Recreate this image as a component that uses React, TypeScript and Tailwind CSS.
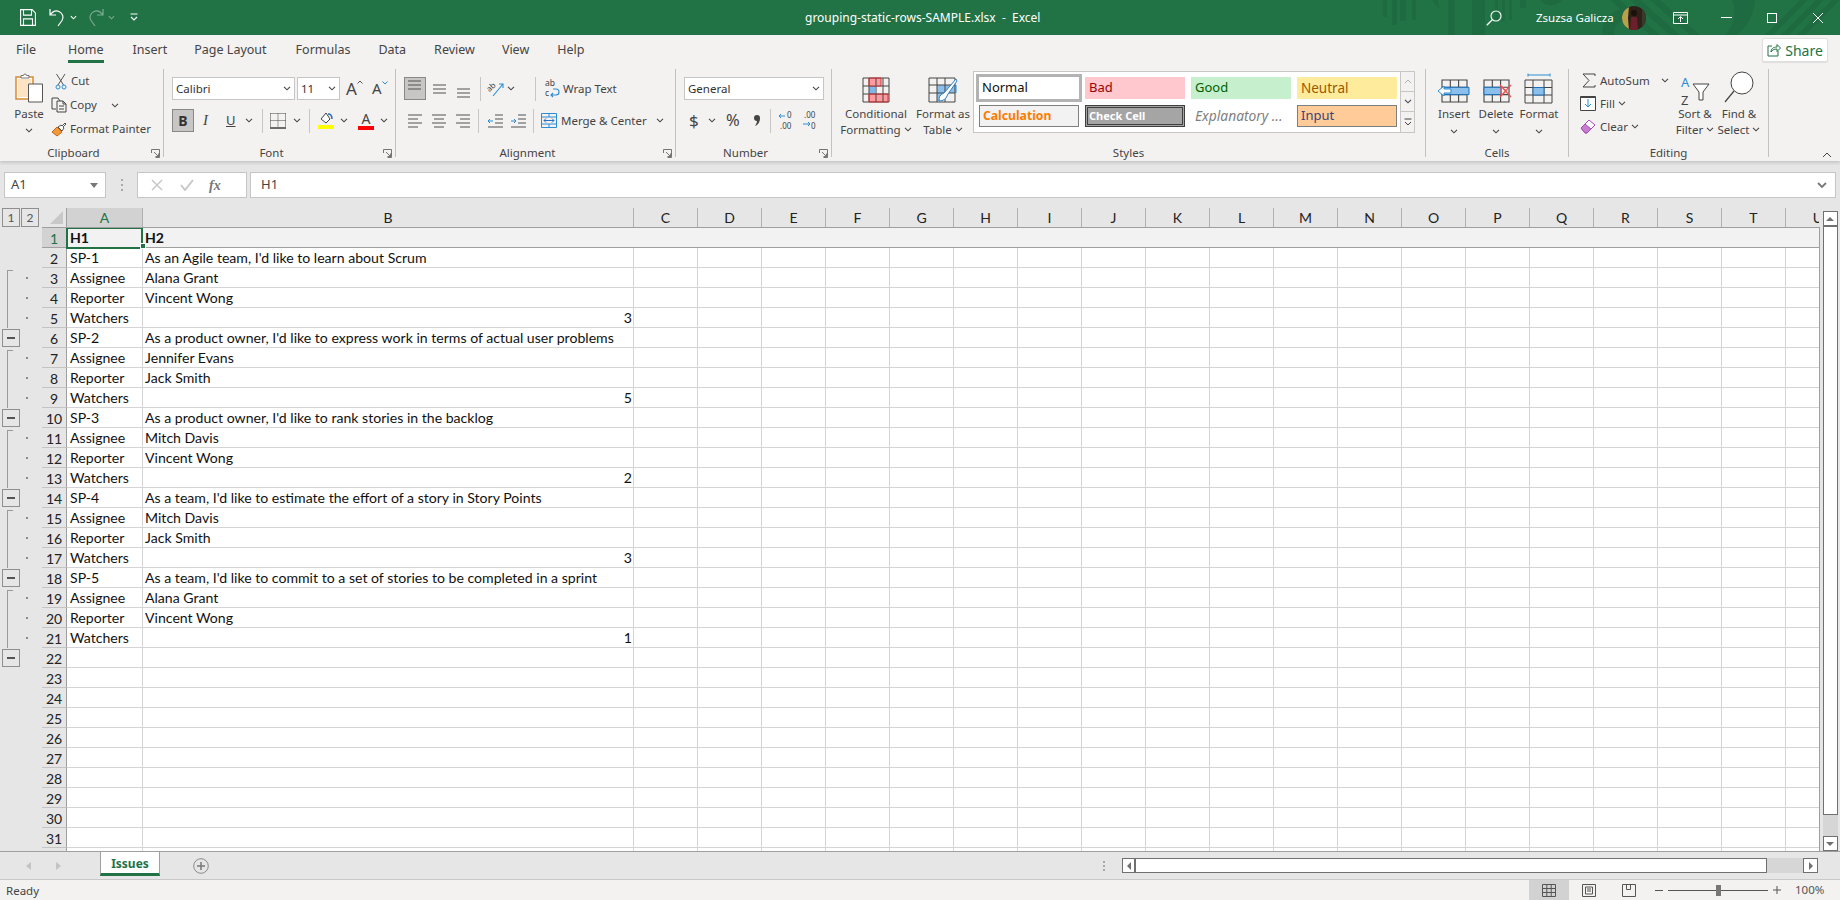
import type { ReactNode } from 'react'

const columns = ['C', 'D', 'E', 'F', 'G', 'H', 'I', 'J', 'K', 'L', 'M', 'N', 'O', 'P', 'Q', 'R', 'S', 'T']

type Row = { a?: string; b?: string; n?: string }

const issues: Row[] = [
  { a: 'SP-1', b: "As an Agile team, I'd like to learn about Scrum" },
  { a: 'Assignee', b: 'Alana Grant' },
  { a: 'Reporter', b: 'Vincent Wong' },
  { a: 'Watchers', n: '3' },
  { a: 'SP-2', b: "As a product owner, I'd like to express work in terms of actual user problems" },
  { a: 'Assignee', b: 'Jennifer Evans' },
  { a: 'Reporter', b: 'Jack Smith' },
  { a: 'Watchers', n: '5' },
  { a: 'SP-3', b: "As a product owner, I'd like to rank stories in the backlog" },
  { a: 'Assignee', b: 'Mitch Davis' },
  { a: 'Reporter', b: 'Vincent Wong' },
  { a: 'Watchers', n: '2' },
  { a: 'SP-4', b: "As a team, I'd like to estimate the effort of a story in Story Points" },
  { a: 'Assignee', b: 'Mitch Davis' },
  { a: 'Reporter', b: 'Jack Smith' },
  { a: 'Watchers', n: '3' },
  { a: 'SP-5', b: "As a team, I'd like to commit to a set of stories to be completed in a sprint" },
  { a: 'Assignee', b: 'Alana Grant' },
  { a: 'Reporter', b: 'Vincent Wong' },
  { a: 'Watchers', n: '1' },
  ...Array.from({ length: 10 }, () => ({})),
]

function Chev({ className = '' }: { className?: string }) {
  return (
    <svg width="8" height="5" viewBox="0 0 8 5" className={`shrink-0 ${className}`}>
      <path d="M1 .8l3 3 3-3" fill="none" stroke="#444" strokeWidth="1.1" />
    </svg>
  )
}

function Launcher() {
  return (
    <svg width="9" height="9" viewBox="0 0 9 9" className="absolute right-[3px] top-[4px]">
      <path d="M.5 4V.5H8.5V8.5H4.5M3 3l4.5 4.5M7.5 4.5v3h-3" fill="none" stroke="#666" strokeWidth=".9" />
    </svg>
  )
}

function Group({ width, label, launcher, children }: { width: string; label: string; launcher?: boolean; children: ReactNode }) {
  return (
    <div className={`flex h-[88px] shrink-0 flex-col border-r border-[#c4c2c0] ${width}`}>
      <div className="flex h-[76px] shrink-0">{children}</div>
      <div className={`relative flex h-[12px] justify-center text-[11.5px] leading-[16px] text-[#444] ${launcher ? 'pr-[16px]' : ''}`}>
        {label}
        {launcher && <Launcher />}
      </div>
    </div>
  )
}

function VSep({ className = '' }: { className?: string }) {
  return <div className={`h-[24px] w-px shrink-0 bg-[#c8c6c4] ${className}`} />
}

function Lines({ mode, className = '' }: { mode: 'top' | 'mid' | 'bot' | 'left' | 'center' | 'right'; className?: string }) {
  const paths = {
    top: 'M1 2h13M1 6h13M1 10h13',
    mid: 'M1 4h13M1 8h13M1 12h13',
    bot: 'M1 7h13M1 11h13M1 15h13',
    left: 'M1 2h14M1 6h10M1 10h14M1 14h10',
    center: 'M1 2h14M3 6h10M1 10h14M3 14h10',
    right: 'M1 2h14M5 6h10M1 10h14M5 14h10',
  }
  return (
    <svg width="16" height="16" viewBox="0 0 16 16" className={`shrink-0 ${className}`}>
      <path d={paths[mode]} stroke="#505050" strokeWidth="1" fill="none" />
    </svg>
  )
}

function TableIcon({ children, w = 32 }: { children?: ReactNode; w?: number }) {
  return (
    <svg width={w} height="26" viewBox="0 0 32 26" className="shrink-0">
      <path d="M4 2h25v22H4zM4 9.3h25M4 16.6h25M12.3 2v22M20.6 2v22" fill="none" stroke="#444" strokeWidth="1.1" />
      {children}
    </svg>
  )
}

function BigButton({ icon, lines, className = '' }: { icon: ReactNode; lines: ReactNode[]; className?: string }) {
  return (
    <div className={`flex shrink-0 flex-col items-center text-[11.5px] leading-[16px] text-[#444] ${className}`}>
      <div className="flex h-[36px] items-end justify-center pb-[1px]">{icon}</div>
      <div className="mt-[1px] whitespace-nowrap">{lines[0]}</div>
      <div className="flex h-[15px] items-center gap-[3px] whitespace-nowrap">{lines[1]}</div>
    </div>
  )
}

function TitleBar() {
  return (
    <div className="relative flex h-[35px] shrink-0 items-center overflow-hidden bg-[#217346] text-white">
      <svg width="470" height="35" viewBox="0 0 470 35" className="absolute right-0 top-0">
        <g fill="#1e6a41">
          <path d="M13 0h4v17h-4zM22 0h5v25h-5zM30 0h6v21h-6zM42 0h4v20h-4zM62 0h6l1 9zM78 0h7v35h-7zM102 0h13v35h-13zM125 0h3v20h-3zM132 0h3v22h-3zM139 0h3v20h-3zM150 0h6v8h-6z" />
          <path d="M170 0h22a14 14 0 0 1-22 0z" />
          <path d="M233 35a22 22 0 0 1 40-16l-6 6a13 13 0 0 0-23 10z" />
          <path d="M280 35l-40-35h10l40 35zM300 35l-40-35h10l40 35zM320 35l-40-35h10l40 35z" />
          <path d="M362 0h23c-1 14-8 27-18 35h-12c8-8 13-22 7-35z" />
          <path d="M395 35l35-35h8l-35 35zM411 35l35-35h8l-35 35zM427 35l35-35h8l-35 35z" />
        </g>
      </svg>
      <div className="relative flex items-center">
        <svg width="16" height="17" viewBox="0 0 16 17" className="ml-[20px]">
          <path d="M.6.6h11.5l3.3 3.3v12.5H.6zM3.5.6v5.5h8V.6M3.5 16.4v-6.5h9v6.5" fill="none" stroke="#fff" strokeWidth="1.1" />
        </svg>
        <svg width="16" height="19" viewBox="0 0 16 19" className="ml-[13px]">
          <path d="M1 1v6h6M1 7c3-4 6-5 9-3.500 4 2 5 6 3 9L9 18" fill="none" stroke="#fff" strokeWidth="1.2" />
        </svg>
        <svg width="7" height="5" viewBox="0 0 8 5" className="ml-[5px]"><path d="M1 1l3 3 3-3" fill="none" stroke="#fff" strokeWidth="1.2" /></svg>
        <svg width="16" height="19" viewBox="0 0 16 19" className="ml-[11px] -scale-x-100 opacity-40">
          <path d="M1 1v6h6M1 7c3-4 6-5 9-3.500 4 2 5 6 3 9L9 18" fill="none" stroke="#fff" strokeWidth="1.2" />
        </svg>
        <svg width="7" height="5" viewBox="0 0 8 5" className="ml-[4px] opacity-40"><path d="M1 1l3 3 3-3" fill="none" stroke="#fff" strokeWidth="1.2" /></svg>
        <svg width="8" height="9" viewBox="0 0 8 9" className="ml-[15px]"><path d="M.5 1h7M1 4l3 3 3-3" fill="none" stroke="#fff" strokeWidth="1.1" /></svg>
      </div>
      <div className="absolute left-[805px] w-[230px] whitespace-nowrap text-center text-[12px]">grouping-static-rows-SAMPLE.xlsx&nbsp; -&nbsp; Excel</div>
      <div className="relative ml-auto flex items-center">
        <svg width="16" height="16" viewBox="0 0 16 16">
          <circle cx="10" cy="6" r="5" fill="none" stroke="#fff" strokeWidth="1.1" />
          <path d="M6.500 9.500L.8 15.200" stroke="#fff" strokeWidth="1.3" />
        </svg>
        <span className="ml-[34px] w-[74px] whitespace-nowrap text-[11.5px]">Zsuzsa Galicza</span>
        <svg width="24" height="24" viewBox="0 0 24 24" className="ml-[12px]">
          <defs><clipPath id="av"><circle cx="12" cy="12" r="12" /></clipPath></defs>
          <g clipPath="url(#av)">
            <rect width="24" height="24" fill="#2e2119" />
            <path d="M0 0h7l-1 12 1 12H0z" fill="#b7a14c" />
            <path d="M20 0h4v24h-4z" fill="#3a3a2c" />
            <circle cx="12" cy="7" r="3" fill="#1c100c" />
            <path d="M9 11h6l1 13H8z" fill="#6d1f2c" />
          </g>
        </svg>
        <svg width="15" height="12" viewBox="0 0 15 12" className="ml-[27px]">
          <path d="M.5 .5h14v11H.5zM.5 3h14M7.500 10V5M5 7l2.500-2.500L10 7" fill="none" stroke="#fff" />
        </svg>
        <div className="ml-[33px] h-px w-[11px] bg-white" />
        <div className="ml-[35px] h-[10px] w-[10px] border border-white" />
        <svg width="10" height="10" viewBox="0 0 10 10" className="ml-[36px] mr-[17px]">
          <path d="M0 0l10 10M10 0L0 10" stroke="#fff" />
        </svg>
      </div>
    </div>
  )
}

function Tabs() {
  const tabs: [string, string][] = [
    ['File', 'ml-[16px]'],
    ['Home', 'ml-[32px]'],
    ['Insert', 'ml-[29px]'],
    ['Page Layout', 'ml-[27px]'],
    ['Formulas', 'ml-[29px]'],
    ['Data', 'ml-[28px]'],
    ['Review', 'ml-[28px]'],
    ['View', 'ml-[27px]'],
    ['Help', 'ml-[28px]'],
  ]
  return (
    <div className="relative flex h-[28px] shrink-0 items-center text-[12.5px] text-[#444]">
      {tabs.map(([t, ml]) => (
        <div key={t} className={`relative flex h-[28px] items-center pt-[3px] ${ml}`}>
          {t}
          {t === 'Home' && <div className="absolute bottom-0 left-0 right-0 h-[3px] bg-[#217346]" />}
        </div>
      ))}
      <div className="ml-auto mr-[12px] mt-[2px] flex h-[24px] w-[66px] items-center justify-center gap-[4px] rounded-[2px] border border-[#e1dfdd] bg-white text-[14px] text-[#217346] shadow-[0_1px_1px_rgba(0,0,0,0.08)]">
        <svg width="14" height="14" viewBox="0 0 14 14">
          <path d="M5 3H1v10h10V8M4 9c0-3 2-5 6-5V1.500L13.500 5 10 8.500V6C7 6 5 7 4 9z" fill="none" stroke="#217346" />
        </svg>
        Share
      </div>
    </div>
  )
}

function Clipboard() {
  return (
    <Group width="w-[164px]" label="Clipboard" launcher>
      <div className="ml-[14px] flex w-[30px] flex-col items-center pt-[4px] text-[11.5px] text-[#444]">
        <svg width="28" height="30" viewBox="0 0 28 30" className="shrink-0">
          <path d="M1 4h17v22H1z" fill="#fff" stroke="#d78a30" strokeWidth="1.5" />
          <path d="M3 6h13v18H3z" fill="#fbe3c3" />
          <path d="M6 5V2.500h2.500a1.500 1.500 0 0 1 3 0H14V5z" fill="#fff" stroke="#777" />
          <path d="M13.500 11h14v18h-14z" fill="#fff" stroke="#555" />
        </svg>
        <div className="mt-[3px] leading-[16px]">Paste</div>
        <Chev className="mt-[6px]" />
      </div>
      <div className="ml-[8px] flex flex-col text-[11.5px] leading-[24px] text-[#444]">
        <div className="flex h-[24px] items-center">
          <svg width="12" height="17" viewBox="0 0 12 17" className="ml-[3px]">
            <path d="M1.500 1l7 11M10 1L3 12" stroke="#555" fill="none" />
            <circle cx="3" cy="14" r="2" fill="none" stroke="#2a8dd4" />
            <circle cx="9" cy="14" r="2" fill="none" stroke="#2a8dd4" />
          </svg>
          <span className="ml-[4px]">Cut</span>
        </div>
        <div className="flex h-[24px] items-center">
          <svg width="16" height="16" viewBox="0 0 16 16" className="-ml-[1px]">
            <path d="M5 12H1V1h6l2 3M6 4h6l3 3v8H6zM12 4v3h3M8 9h5M8 12h5" fill="none" stroke="#444" />
          </svg>
          <span className="ml-[3px]">Copy</span>
          <Chev className="ml-[14px]" />
        </div>
        <div className="flex h-[24px] items-center">
          <svg width="16" height="16" viewBox="0 0 16 16" className="-ml-[1px]">
            <path d="M1 11l5-5 5 5-5 4z" fill="#f19a3b" stroke="#c8650e" />
            <path d="M7 6l3-2 1 1 3-3 1 1-3 3 1 1-2 3z" fill="#fff" stroke="#555" />
          </svg>
          <span className="ml-[3px] whitespace-nowrap">Format Painter</span>
        </div>
      </div>
    </Group>
  )
}

function Font() {
  return (
    <Group width="w-[232px]" label="Font" launcher>
      <div className="flex flex-col pl-[8px] pt-[8px] text-[11.5px] text-[#333]">
        <div className="flex h-[23px] items-center">
          <div className="flex h-[23px] w-[123px] items-center justify-between border border-[#c8c6c4] bg-white pl-[3px] pr-[3px]">Calibri<Chev /></div>
          <div className="ml-[2px] flex h-[23px] w-[43px] items-center justify-between border border-[#c8c6c4] bg-white pl-[3px] pr-[3px]">11<Chev /></div>
          <div className="ml-[6px] flex w-[17px] items-start text-[17px] leading-none text-[#444]">
            A
            <svg width="6" height="4" viewBox="0 0 6 4" className="shrink-0"><path d="M.5 3.500L3 1l2.500 2.500" fill="none" stroke="#555" /></svg>
          </div>
          <div className="ml-[9px] flex w-[15px] items-start text-[15px] leading-none text-[#444]">
            A
            <svg width="6" height="4" viewBox="0 0 6 4" className="shrink-0"><path d="M.5 .5L3 3 5.500 .5" fill="none" stroke="#2a8dd4" /></svg>
          </div>
        </div>
        <div className="mt-[9px] flex h-[23px] items-center">
          <div className="flex h-[23px] w-[22px] items-center justify-center border border-[#8a8886] bg-[#c8c6c4] text-[14px] font-bold text-[#333]">B</div>
          <div className="ml-[9px] w-[8px] font-['Liberation_Serif',serif] text-[15px] italic text-[#444]">I</div>
          <div className="ml-[15px] w-[10px] text-[13px] leading-[15px] text-[#444] underline">U</div>
          <Chev className="ml-[9px]" />
          <VSep className="ml-[9px]" />
          <svg width="16" height="16" viewBox="0 0 16 16" className="ml-[7px]">
            <path d="M.5 .5h15M.5 .5v14M15.500 .5v14M8 .5v14M.5 7.500h15" stroke="#444" strokeDasharray="1 1" fill="none" />
            <path d="M0 15h16" stroke="#111" strokeWidth="1.2" />
          </svg>
          <Chev className="ml-[7px]" />
          <VSep className="ml-[8px]" />
          <div className="ml-[8px] flex w-[16px] flex-col items-center">
            <svg width="14" height="12" viewBox="0 0 14 12">
              <path d="M2 7l5-6 4 6-4 4z" fill="#fff" stroke="#444" />
              <path d="M9 2c3 0 4 2 4 5" fill="none" stroke="#2a6ec0" strokeWidth="1.500" />
            </svg>
            <div className="mt-[1px] h-[4px] w-[16px] bg-[#ffff00]" />
          </div>
          <Chev className="ml-[6px]" />
          <div className="ml-[10px] flex w-[16px] flex-col items-center text-[14px] leading-[13px] text-[#444]">
            A
            <div className="mt-[1px] h-[4px] w-[16px] bg-[#ff0000]" />
          </div>
          <Chev className="ml-[6px]" />
        </div>
      </div>
    </Group>
  )
}

function Alignment() {
  return (
    <Group width="w-[280px]" label="Alignment" launcher>
      <div className="flex flex-col pt-[8px] text-[11.5px] text-[#444]">
        <div className="flex h-[23px] items-center">
          <div className="ml-[8px] flex h-[23px] w-[22px] items-center justify-center border border-[#8a8886] bg-[#c8c6c4]"><Lines mode="top" className="mb-[4px]" /></div>
          <Lines mode="mid" className="ml-[6px]" />
          <Lines mode="bot" className="ml-[8px] mt-[2px]" />
          <VSep className="ml-[8px]" />
          <svg width="16" height="16" viewBox="0 0 16 16" className="ml-[7px] overflow-visible">
            <text x="0" y="8" fontSize="8" fill="#444" transform="rotate(-40 5 8)">ab</text>
            <path d="M5 15L15 3M11 3h4v4" fill="none" stroke="#2a8dd4" strokeWidth="1.1" />
          </svg>
          <Chev className="ml-[3px]" />
          <VSep className="ml-[20px]" />
          <svg width="15" height="17" viewBox="0 0 15 17" className="ml-[9px] overflow-visible">
            <text x="0" y="6" fontSize="8.500" fill="#444">ab</text>
            <text x="0" y="16" fontSize="8.500" fill="#444">c</text>
            <path d="M6 15h5a3 3 0 0 0 0-6H8M8 13l-2 2 2 2" fill="none" stroke="#2a8dd4" strokeWidth="1.100" />
          </svg>
          <span className="ml-[3px] whitespace-nowrap">Wrap Text</span>
        </div>
        <div className="mt-[9px] flex h-[23px] items-center">
          <Lines mode="left" className="ml-[11px]" />
          <Lines mode="center" className="ml-[8px]" />
          <Lines mode="right" className="ml-[8px]" />
          <VSep className="ml-[7px]" />
          <svg width="16" height="16" viewBox="0 0 16 16" className="ml-[8px]">
            <path d="M8 2h8M8 6h8M8 10h8M1 14h15" stroke="#505050" fill="none" />
            <path d="M6 8H1M3 6L1 8l2 2" stroke="#2a8dd4" fill="none" />
          </svg>
          <svg width="16" height="16" viewBox="0 0 16 16" className="ml-[7px]">
            <path d="M8 2h8M8 6h8M8 10h8M1 14h15" stroke="#505050" fill="none" />
            <path d="M1 8h5M4 6l2 2-2 2" stroke="#2a8dd4" fill="none" />
          </svg>
          <VSep className="ml-[7px]" />
          <svg width="16" height="15" viewBox="0 0 16 15" className="ml-[7px]">
            <path d="M.5 .5h15v14H.5zM.5 4h15M.5 11h15M8 .5V4M8 11v3.500" fill="none" stroke="#2a8dd4" />
            <path d="M3 7.500h10M5 5.500l-2 2 2 2M11 5.500l2 2-2 2" fill="none" stroke="#2a6ec0" />
          </svg>
          <span className="ml-[4px] whitespace-nowrap">Merge &amp; Center</span>
          <Chev className="ml-[9px]" />
        </div>
      </div>
    </Group>
  )
}

function NumberGroup() {
  return (
    <Group width="w-[156px]" label="Number" launcher>
      <div className="flex flex-col pl-[8px] pt-[8px] text-[11.5px] text-[#333]">
        <div className="flex h-[23px] w-[140px] items-center justify-between border border-[#c8c6c4] bg-white px-[3px]">General<Chev /></div>
        <div className="mt-[9px] flex h-[23px] items-center text-[#444]">
          <span className="ml-[5px] w-[9px] text-[17px]">$</span>
          <Chev className="ml-[10px]" />
          <span className="ml-[10px] w-[16px] text-[16.500px]">%</span>
          <svg width="8" height="14" viewBox="0 0 8 14" className="ml-[11px]">
            <path d="M4 1a3 3 0 0 1 3 3c0 4-2 7-5 8 1-2 2-3 2-5a3 3 0 0 1 0-6z" fill="#444" />
          </svg>
          <VSep className="ml-[9px]" />
          <svg width="16" height="17" viewBox="0 0 16 17" className="ml-[7px] overflow-visible">
            <text x="9" y="6" fontSize="8" fill="#444">0</text>
            <text x="2" y="17" fontSize="8" fill="#444">.00</text>
            <path d="M7 4H1M3 2L1 4l2 2" stroke="#2a8dd4" fill="none" />
          </svg>
          <svg width="16" height="17" viewBox="0 0 16 17" className="ml-[8px] overflow-visible">
            <text x="2" y="6" fontSize="8" fill="#444">.00</text>
            <text x="9" y="17" fontSize="8" fill="#444">0</text>
            <path d="M1 12h7M6 10l2 2-2 2" stroke="#2a8dd4" fill="none" />
          </svg>
        </div>
      </div>
    </Group>
  )
}

function StyleCell({ className, children }: { className: string; children: ReactNode }) {
  return <div className={`flex h-[22px] items-center overflow-hidden whitespace-nowrap text-[13px] ${className}`}>{children}</div>
}

function Styles() {
  return (
    <Group width="w-[594px]" label="Styles">
      <BigButton
        className="ml-[6px] w-[76px]"
        icon={
          <svg width="28" height="26" viewBox="0 0 28 26" className="mb-[1px]">
            <path d="M7 1h12v7H7zM7 17h19v8H7z" fill="#ff9a9e" />
            <path d="M7 9h6v8H7z" fill="#7fb7ea" />
            <path d="M1 1h26v24H1zM1 9h26M1 17h26M7 1v24M14 1v24M21 1v24" fill="none" stroke="#444" />
            <path d="M7 1h12v8H7zM7 17h19v8H7z" fill="none" stroke="#d13438" />
          </svg>
        }
        lines={['Conditional', <>Formatting <Chev /></>]}
      />
      <BigButton
        className="w-[58px]"
        icon={
          <svg width="30" height="28" viewBox="0 0 30 28">
            <path d="M15 9h14v8H15zM9 9h6v16H9z" fill="#8cc0ec" />
            <path d="M1 2h26v24H1zM1 9h26M1 17h26M9 2v24M17 2v24" fill="none" stroke="#444" />
            <path d="M28 3L16 17l-2 1c-2 1-3 3-3 7 4 0 7-2 8-5l1-2L29 5z" fill="#fff" stroke="#2f7ec2" />
          </svg>
        }
        lines={['Format as', <>Table <Chev /></>]}
      />
      <div className="ml-[1px] mt-[2px] flex h-[62px] w-[442px] border border-[#c8c6c4] bg-white">
        <div className="flex w-[427px] flex-col pl-[2px] pt-[2px]">
          <div className="flex h-[28px] items-center">
            <StyleCell className="!h-[28px] w-[106px] border-[3px] border-[#b3b3b3] pl-[3px] text-[#111]">Normal</StyleCell>
            <StyleCell className="ml-[3px] w-[100px] bg-[#ffc7ce] pl-[4px] text-[#9c0006]">Bad</StyleCell>
            <StyleCell className="ml-[6px] w-[100px] bg-[#c6efce] pl-[4px] text-[#006100]">Good</StyleCell>
            <StyleCell className="ml-[6px] w-[100px] bg-[#ffeb9c] pl-[4px] !text-[13.500px] text-[#9c5700]">Neutral</StyleCell>
          </div>
          <div className="mt-[3px] flex h-[22px] items-center">
            <StyleCell className="ml-[3px] w-[100px] border border-[#7f7f7f] bg-[#f2f2f2] pl-[3px] !text-[12.200px] font-bold text-[#fa7d00]">Calculation</StyleCell>
            <StyleCell className="ml-[6px] w-[100px] border-[3px] border-double border-[#3f3f3f] bg-[#a5a5a5] pl-[1px] !text-[11px] font-bold text-white">Check Cell</StyleCell>
            <StyleCell className="ml-[6px] w-[100px] pl-[4px] !text-[13.800px] italic text-[#7f7f7f]">Explanatory ...</StyleCell>
            <StyleCell className="ml-[6px] w-[100px] border border-[#7f7f7f] bg-[#ffcc99] pl-[3px] text-[#3f3f76]">Input</StyleCell>
          </div>
        </div>
        <div className="flex w-[14px] flex-col border-l border-[#c8c6c4] bg-[#f3f2f1]">
          <div className="flex h-[20px] items-center justify-center border-b border-[#c8c6c4]">
            <svg width="8" height="5" viewBox="0 0 8 5"><path d="M1 4l3-3 3 3" fill="none" stroke="#b0b0b0" /></svg>
          </div>
          <div className="flex h-[20px] items-center justify-center border-b border-[#c8c6c4]"><Chev /></div>
          <div className="flex flex-1 items-center justify-center">
            <svg width="8" height="8" viewBox="0 0 8 8"><path d="M.5 1h7M1 4l3 3 3-3" fill="none" stroke="#444" /></svg>
          </div>
        </div>
      </div>
    </Group>
  )
}

function Cells() {
  return (
    <Group width="w-[143px]" label="Cells">
      <BigButton
        className="ml-[7px] w-[42px]"
        icon={
          <TableIcon>
            <path d="M4 9.300h27v7.300H4z" fill="#8cc0ec" stroke="#1c6fb8" />
            <path d="M0 13l6-5v3h7v4H6v3z" fill="#fff" stroke="#2a8dd4" />
          </TableIcon>
        }
        lines={['Insert', <Chev key="c" className="mt-[3px]" />]}
      />
      <BigButton
        className="w-[42px]"
        icon={
          <TableIcon>
            <path d="M4 9.300h17v7.300H4z" fill="#8cc0ec" stroke="#1c6fb8" />
            <path d="M21 8l5 5-5 5zM20 7l11 12M31 7L20 19" fill="none" stroke="#e8534f" strokeWidth="1.200" />
          </TableIcon>
        }
        lines={['Delete', <Chev key="c" className="mt-[3px]" />]}
      />
      <BigButton
        className="w-[44px]"
        icon={
          <svg width="30" height="31" viewBox="0 0 30 31">
            <path d="M4 2h22M4 .5v3M26 .5v3" stroke="#2a8dd4" fill="none" />
            <path d="M1 7h27v23H1zM1 14.500h27M1 22h27M9 7v23M20 7v23" fill="none" stroke="#444" />
            <path d="M9 14.500h11V22H9z" fill="#8cc0ec" stroke="#1c6fb8" />
          </svg>
        }
        lines={['Format', <Chev key="c" className="mt-[3px]" />]}
      />
    </Group>
  )
}

function Editing() {
  return (
    <Group width="w-[200px]" label="Editing">
      <div className="flex w-[104px] flex-col pl-[11px] text-[11.5px] text-[#444]">
        <div className="flex h-[23px] items-center">
          <svg width="14" height="15" viewBox="0 0 14 15" className="ml-[2px]"><path d="M13 3V1H1l6 6.500L1 14h12v-2" fill="none" stroke="#444" /></svg>
          <span className="ml-[4px]">AutoSum</span>
          <Chev className="ml-[11px]" />
        </div>
        <div className="flex h-[23px] items-center">
          <svg width="16" height="15" viewBox="0 0 16 15">
            <path d="M.5 .5h15v14H.5z" fill="#fff" stroke="#444" />
            <path d="M8 3v8M5 8l3 3 3-3" fill="none" stroke="#2a8dd4" />
            <path d="M.5 .5h15v1.500H.5z" fill="#444" />
          </svg>
          <span className="ml-[4px]">Fill</span>
          <Chev className="ml-[3px]" />
        </div>
        <div className="flex h-[23px] items-center">
          <svg width="16" height="16" viewBox="0 0 16 16">
            <path d="M1 9l8-8 6 5-8 8H5z" fill="#fff" stroke="#a64ab5" />
            <path d="M1 9l4-4 6 5-4 4H5z" fill="#c77bd1" stroke="#a64ab5" />
          </svg>
          <span className="ml-[4px]">Clear</span>
          <Chev className="ml-[3px]" />
        </div>
      </div>
      <BigButton
        className="w-[44px]"
        icon={
          <svg width="29" height="27" viewBox="0 0 29 27" className="overflow-visible">
            <text x="0" y="10" fontSize="13" fill="#2a8dd4">A</text>
            <text x="0" y="28" fontSize="13" fill="#444">Z</text>
            <path d="M12 7h16l-6 8v8h-4v-8z" fill="#fff" stroke="#444" />
          </svg>
        }
        lines={['Sort &', <>Filter <Chev /></>]}
      />
      <BigButton
        className="w-[44px]"
        icon={
          <svg width="30" height="33" viewBox="0 0 30 33">
            <circle cx="18" cy="12" r="11" fill="#fff" stroke="#444" />
            <path d="M10 20L1 31" stroke="#444" strokeWidth="1.200" />
          </svg>
        }
        lines={['Find &', <>Select <Chev /></>]}
      />
    </Group>
  )
}

function Ribbon() {
  return (
    <div className="relative z-10 flex h-[126px] shrink-0 flex-col bg-[#f3f2f1] shadow-[0_2px_3px_rgba(0,0,0,0.14)]">
      <Tabs />
      <div className="relative flex h-[98px] pt-[6px]">
        <Clipboard />
        <Font />
        <Alignment />
        <NumberGroup />
        <Styles />
        <Cells />
        <Editing />
        <svg width="10" height="6" viewBox="0 0 10 6" className="absolute right-[8px] top-[89px]"><path d="M1 5l4-4 4 4" fill="none" stroke="#444" /></svg>
      </div>
    </div>
  )
}

function FormulaBar() {
  return (
    <div className="mt-[11px] flex h-[26px] shrink-0 items-stretch text-[13px] text-[#444]">
      <div className="ml-[4px] flex w-[102px] items-center justify-between border border-[#c8c6c4] bg-white pl-[6px] pr-[7px]">
        A1
        <svg width="8" height="5" viewBox="0 0 8 5"><path d="M0 0h8L4 5z" fill="#777" /></svg>
      </div>
      <div className="ml-[15px] flex w-[2px] flex-col items-center justify-center gap-[3px]">
        <div className="h-[2px] w-[2px] bg-[#a8a8a8]" />
        <div className="h-[2px] w-[2px] bg-[#a8a8a8]" />
        <div className="h-[2px] w-[2px] bg-[#a8a8a8]" />
      </div>
      <div className="ml-[14px] flex w-[110px] items-center border border-[#c8c6c4] bg-white">
        <svg width="12" height="12" viewBox="0 0 12 12" className="ml-[13px]"><path d="M1 1l10 10M11 1L1 11" stroke="#c8c8c8" strokeWidth="1.500" /></svg>
        <svg width="14" height="12" viewBox="0 0 14 12" className="ml-[17px]"><path d="M1 6l4 5 8-10" fill="none" stroke="#c8c8c8" strokeWidth="2" /></svg>
        <span className="ml-[15px] font-['Liberation_Serif',serif] text-[14px] italic font-bold text-[#777]">fx</span>
      </div>
      <div className="ml-[3px] mr-[4px] flex flex-1 items-center justify-between border border-[#c8c6c4] bg-white pl-[10px] pr-[8px]">
        H1
        <svg width="10" height="7" viewBox="0 0 10 7"><path d="M1 1l4 4 4-4" fill="none" stroke="#777" strokeWidth="1.800" /></svg>
      </div>
    </div>
  )
}

function ColHead({ label, width, active }: { label: string; width: string; active?: boolean }) {
  return (
    <div className={`flex shrink-0 items-center justify-center border-r border-[#b1b1b1] text-[14px] ${width} ${active ? 'bg-[#d2d2d2] text-[#217346]' : 'text-[#222]'}`}>{label}</div>
  )
}

function ColumnHeaders() {
  return (
    <div className="mt-[10px] flex h-[20px] shrink-0">
      <div className="flex w-[42px] shrink-0 items-start gap-[1px] pl-[2px]">
        <div className="flex h-[19px] w-[18px] items-center justify-center border border-[#8f8f8f] text-[12px] text-[#555]">1</div>
        <div className="flex h-[19px] w-[18px] items-center justify-center border border-[#8f8f8f] text-[12px] text-[#555]">2</div>
      </div>
      <div className="flex w-[1778px] shrink-0 border-b border-[#9f9f9f]">
        <div className="flex w-[25px] shrink-0 items-center justify-end border-r border-[#9f9f9f] pr-[3px]">
          <svg width="13" height="13" viewBox="0 0 13 13"><path d="M13 0v13H0z" fill="#c8c8c8" /></svg>
        </div>
        <ColHead label="A" width="w-[76px]" active />
        <ColHead label="B" width="w-[491px]" />
        {columns.map((c) => (
          <ColHead key={c} label={c} width="w-[64px]" />
        ))}
        <div className="w-[33px] shrink-0 overflow-hidden text-[14px] text-[#222]">
          <div className="w-[64px] text-center leading-[19px]">U</div>
        </div>
      </div>
    </div>
  )
}

function OutlineCell({ n }: { n: number }) {
  const isToggle = n >= 6 && n <= 22 && (n - 6) % 4 === 0
  const inGroup = n >= 3 && n <= 21 && !isToggle
  const isTop = inGroup && (n - 3) % 4 === 0
  return (
    <div className="flex h-[20px] w-[42px] shrink-0 items-center">
      <div className="flex h-[20px] w-[21px] shrink-0 items-start">
        {isToggle && (
          <div className="ml-[2px] mt-[1px] flex h-[18px] w-[18px] items-center justify-center border border-[#8f8f8f]">
            <div className="h-[2px] w-[8px] bg-[#555]" />
          </div>
        )}
        {isTop && <div className="ml-[7px] mt-[2px] h-[18px] w-[6px] border-l-[1.500px] border-t-[1.500px] border-[#9a9a9a]" />}
        {inGroup && !isTop && <div className="ml-[7px] h-[20px] border-l-[1.500px] border-[#9a9a9a]" />}
      </div>
      {inGroup && <div className="ml-[5px] h-[2px] w-[2px] bg-[#8a8a8a]" />}
    </div>
  )
}

function RowLine({ n, row }: { n: number; row: Row }) {
  return (
    <div className="flex h-[20px] shrink-0">
      <OutlineCell n={n} />
      <div className="flex h-[20px] w-[25px] shrink-0 items-center justify-center border-b border-r border-b-[#c4c4c4] border-r-[#9f9f9f] pt-[1px] text-[14px] text-[#222]">{n}</div>
      <div className="flex w-[76px] shrink-0 items-center border-b border-r border-[#d4d4d4] bg-white pl-[3px] pt-[1px] text-[14.100px] text-[#111]">{row.a}</div>
      <div className="flex w-[491px] shrink-0 items-center justify-between whitespace-nowrap border-b border-r border-[#d4d4d4] bg-white pl-[2px] pr-[1px] pt-[1px] text-[14.100px] text-[#111]">
        <span>{row.b}</span>
        <span>{row.n}</span>
      </div>
      {columns.map((c) => (
        <div key={c} className="w-[64px] shrink-0 border-b border-r border-[#d4d4d4] bg-white" />
      ))}
      <div className="w-[33px] shrink-0 border-b border-[#d4d4d4] bg-white" />
    </div>
  )
}

function HeaderRow() {
  return (
    <div className="flex h-[20px] shrink-0">
      <div className="w-[42px] shrink-0" />
      <div className="flex flex-1 border-b border-[#9f9f9f]">
        <div className="flex w-[25px] shrink-0 items-center justify-center border-r border-[#9f9f9f] bg-[#d2d2d2] pt-[1px] text-[14px] text-[#217346]">1</div>
        <div className="relative flex w-[76px] shrink-0 items-center bg-[#f2f2f2] pl-[3px] pt-[1px] text-[14.100px] font-bold text-[#111]">
          H1
          <div className="absolute -left-px -top-px h-[22px] w-[77px] border-2 border-[#217346]" />
          <div className="absolute -bottom-[2px] -right-[3px] z-10 h-[6px] w-[6px] border border-white bg-[#217346]" />
        </div>
        <div className="flex w-[491px] shrink-0 items-center bg-[#f2f2f2] pl-[2px] pt-[1px] text-[14.100px] font-bold text-[#111]">H2</div>
        <div className="flex-1 bg-[#f2f2f2]" />
      </div>
    </div>
  )
}

function VScroll() {
  return (
    <div className="flex w-[20px] shrink-0 flex-col items-center pt-[1px]">
      <div className="flex h-[15px] w-[15px] shrink-0 items-center justify-center border border-[#707070] bg-white">
        <svg width="8" height="4" viewBox="0 0 8 4"><path d="M4 0l4 4H0z" fill="#707070" /></svg>
      </div>
      <div className="flex w-[15px] flex-1 flex-col bg-[#d6d6d6]">
        <div className="h-[589px] border border-[#707070] bg-white" />
      </div>
      <div className="flex h-[15px] w-[15px] shrink-0 items-center justify-center border border-[#707070] bg-white">
        <svg width="8" height="4" viewBox="0 0 8 4"><path d="M4 4l4-4H0z" fill="#707070" /></svg>
      </div>
    </div>
  )
}

function SheetTabs() {
  return (
    <div className="flex h-[28px] shrink-0 items-center border-t border-[#9f9f9f] text-[12px]">
      <svg width="5" height="8" viewBox="0 0 5 8" className="ml-[26px]"><path d="M5 0v8L0 4z" fill="#c4c4c4" /></svg>
      <svg width="5" height="8" viewBox="0 0 5 8" className="ml-[25px]"><path d="M0 0v8l5-4z" fill="#c4c4c4" /></svg>
      <div className="ml-[39px] flex h-[24px] w-[60px] items-center justify-center self-start border-x border-b-[3px] border-x-[#9f9f9f] border-b-[#217346] bg-white pt-[3px] font-bold text-[#217346]">Issues</div>
      <svg width="16" height="16" viewBox="0 0 16 16" className="ml-[33px]">
        <circle cx="8" cy="8" r="7.300" fill="none" stroke="#8a8a8a" />
        <path d="M8 4v8M4 8h8" stroke="#777" strokeWidth="1.500" />
      </svg>
      <div className="ml-[894px] flex flex-col gap-[2px]">
        <div className="h-[2px] w-[2px] bg-[#a8a8a8]" />
        <div className="h-[2px] w-[2px] bg-[#a8a8a8]" />
        <div className="h-[2px] w-[2px] bg-[#a8a8a8]" />
      </div>
      <div className="ml-[17px] flex h-[15px] w-[13px] items-center justify-center border border-[#707070] bg-white">
        <svg width="4" height="8" viewBox="0 0 4 8"><path d="M4 0v8L0 4z" fill="#707070" /></svg>
      </div>
      <div className="flex h-[15px] w-[668px] bg-[#d6d6d6]">
        <div className="w-[632px] border border-[#707070] bg-white" />
      </div>
      <div className="flex h-[15px] w-[15px] items-center justify-center border border-[#707070] bg-white">
        <svg width="4" height="8" viewBox="0 0 4 8"><path d="M0 0v8l4-4z" fill="#707070" /></svg>
      </div>
    </div>
  )
}

function StatusBar() {
  return (
    <div className="flex h-[21px] shrink-0 items-center border-t border-[#c8c8c8] bg-[#f3f2f1] text-[11.5px] text-[#444]">
      <span className="ml-[6px] pt-[1px]">Ready</span>
      <div className="ml-auto flex h-[21px] w-[40px] items-center justify-center bg-[#d2d2d2]">
        <svg width="14" height="13" viewBox="0 0 14 13"><path d="M.5 .5h13v12H.5zM.5 4.500h13M.5 8.500h13M4.800 .5v12M9.200 .5v12" fill="none" stroke="#555" /></svg>
      </div>
      <svg width="14" height="13" viewBox="0 0 14 13" className="ml-[13px]"><path d="M.5 .5h13v12H.5zM3.500 3h7v7h-7zM5 5h4M5 7h4" fill="none" stroke="#555" /></svg>
      <svg width="14" height="13" viewBox="0 0 14 13" className="ml-[26px]"><path d="M.5 .5h13v12H.5zM4.500 .5v5h4v-5" fill="none" stroke="#555" /></svg>
      <div className="ml-[19px] h-px w-[8px] bg-[#555]" />
      <div className="relative ml-[5px] h-px w-[100px] bg-[#555]">
        <div className="absolute left-[48px] top-[-5px] h-[11px] w-[5px] bg-[#777]" />
      </div>
      <svg width="8" height="8" viewBox="0 0 8 8" className="ml-[5px]"><path d="M4 0v8M0 4h8" stroke="#555" /></svg>
      <span className="ml-[14px] mr-[18px] w-[27px] whitespace-nowrap text-[#555]">100%</span>
    </div>
  )
}

export default function App() {
  return (
    <div className="flex h-[900px] w-[1840px] flex-col overflow-hidden bg-[#e6e6e6] font-['Noto_Sans',sans-serif]">
      <TitleBar />
      <Ribbon />
      <FormulaBar />
      <div className="flex h-[653px] shrink-0">
        <div className="flex w-[1820px] shrink-0 flex-col font-['Lato',sans-serif]">
          <ColumnHeaders />
          <div className="flex h-[623px] shrink-0 flex-col overflow-hidden border-r border-[#9f9f9f]">
            <HeaderRow />
            {issues.map((row, i) => (
              <RowLine key={i} n={i + 2} row={row} />
            ))}
            <RowLine n={32} row={{}} />
          </div>
        </div>
        <div className="mt-[12px] flex">
          <VScroll />
        </div>
      </div>
      <SheetTabs />
      <StatusBar />
    </div>
  )
}
